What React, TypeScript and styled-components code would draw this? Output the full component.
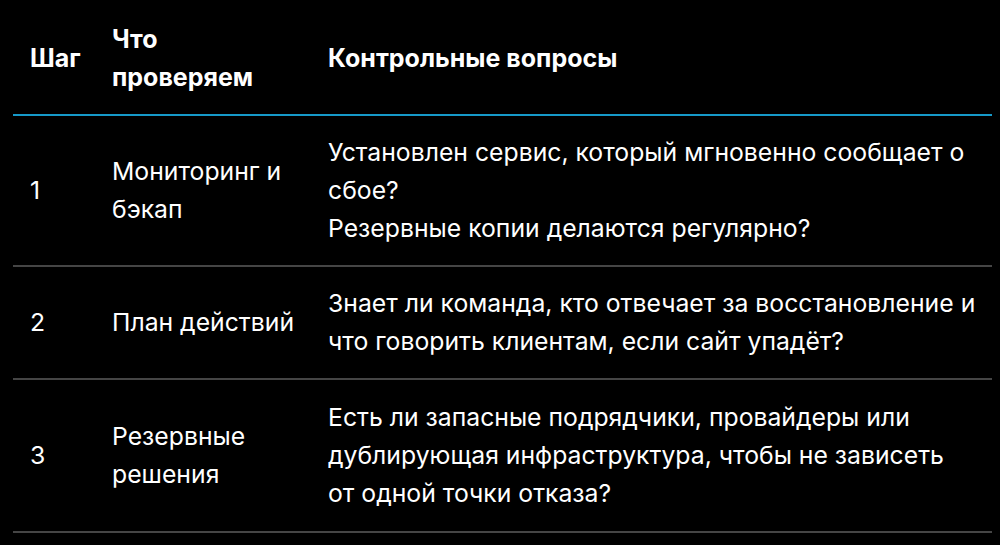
import styled, { createGlobalStyle } from "styled-components";

const GlobalStyle = createGlobalStyle`
    html, body {
        margin: 0;
        padding: 0;
        background: #000;
    }
    body {
        font-family: Inter, "Noto Sans", sans-serif;
        color: #fff;
    }
`;

const Page = styled.div`
    width: 1000px;
    height: 545px;
    box-sizing: border-box;
    padding: 3px 8px 0 13px;
    background: #000;
    overflow: hidden;
`;

const Table = styled.table`
    width: 979px;
    table-layout: fixed;
    border-collapse: collapse;
    font-size: 24.75px;
    line-height: 38px;
    color: #fff;
`;

const HeadRow = styled.tr`
    border-bottom: 2px solid #1699c9;
`;

const BodyRow = styled.tr`
    border-bottom: 2px solid #454545;

    &:last-child td {
        padding-top: 18px;
        padding-bottom: 19px;
    }
`;

const HeadCell = styled.th<{ $w?: number }>`
    width: ${(p) => (p.$w ? `${p.$w}px` : "auto")};
    padding: 17px 10px 18px 17px;
    text-align: left;
    font-weight: 700;
    font-size: 25px;
    vertical-align: middle;
`;

const Cell = styled.td`
    padding: 17px 10px 18px 17px;
    text-align: left;
    font-weight: 400;
    vertical-align: middle;
`;

const Line = styled.span`
    display: block;
    white-space: nowrap;
`;

const rows = [
    {
        step: "1",
        what: "Мониторинг и бэкап",
        lines: [
            "Установлен сервис, который мгновенно сообщает о",
            "сбое?",
            "Резервные копии делаются регулярно?",
        ],
    },
    {
        step: "2",
        what: "План действий",
        lines: [
            "Знает ли команда, кто отвечает за восстановление и",
            "что говорить клиентам, если сайт упадёт?",
        ],
    },
    {
        step: "3",
        what: "Резервные решения",
        lines: [
            "Есть ли запасные подрядчики, провайдеры или",
            "дублирующая инфраструктура, чтобы не зависеть",
            "от одной точки отказа?",
        ],
    },
];

const App = () => {
    return (
        <>
            <GlobalStyle />
            <Page>
                <Table>
                    <thead>
                        <HeadRow>
                            <HeadCell $w={55}>Шаг</HeadCell>
                            <HeadCell $w={189}>Что проверяем</HeadCell>
                            <HeadCell>Контрольные вопросы</HeadCell>
                        </HeadRow>
                    </thead>
                    <tbody>
                        {rows.map((row) => (
                            <BodyRow key={row.step}>
                                <Cell>{row.step}</Cell>
                                <Cell>{row.what}</Cell>
                                <Cell>
                                    {row.lines.map((l, idx) => (
                                        <Line key={idx}>{l}</Line>
                                    ))}
                                </Cell>
                            </BodyRow>
                        ))}
                    </tbody>
                </Table>
            </Page>
        </>
    );
};

export default App;
